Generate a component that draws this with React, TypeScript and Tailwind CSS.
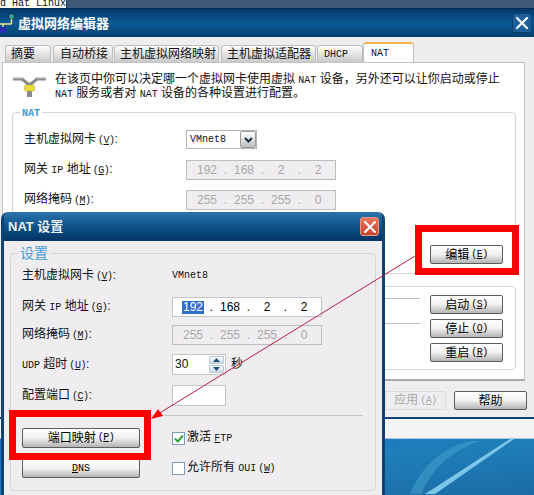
import React from 'react';

const cjk = "font-['Liberation_Sans','Noto_Sans_CJK_SC',sans-serif]";

// SimSun's half width latin
const Latin: React.FC<{ children: React.ReactNode }> = ({ children }) => (
    <span className="font-['Liberation_Mono',monospace] text-[10px]">{children}</span>
);

// mnemonic such as (V)
const Hot: React.FC<{ k: string }> = ({ k }) => (
    <span className="ml-[2px] font-['Liberation_Mono',monospace] text-[10px] tracking-[-0.5px]">
        (<span className="underline">{k}</span>)
    </span>
);

const Button: React.FC<{ className?: string; children: React.ReactNode }> = ({ className, children }) => (
    <div
        className={`flex items-center justify-center rounded-[2px] border border-[#5c5c5c] bg-gradient-to-b from-white via-[#f0f0f0] to-[#b4b4b4] text-[12px] leading-none text-black ${className}`}
    >
        {children}
    </div>
);

const IpField: React.FC<{ parts: string[]; disabled?: boolean; selectFirst?: boolean; className?: string }> = ({
    parts,
    disabled,
    selectFirst,
    className,
}) => (
    <div
        className={`flex h-[20px] w-[150px] items-center pl-[7px] text-[12px] font-['Liberation_Sans',sans-serif] border ${
            disabled ? 'border-[#bdbdbd] bg-[#efedf0] text-[#a9a9a9]' : 'border-[#c4c4c4] bg-white text-black'
        } ${className ?? ''}`}
    >
        {parts.map((p, i) => (
            <React.Fragment key={i}>
                <span className="flex w-[26px] justify-center">
                    <span className={selectFirst && i === 0 ? 'bg-[#2f6fc9] px-px text-white' : ''}>{p}</span>
                </span>
                {i < 3 && <span className="flex w-[11px] justify-center">.</span>}
            </React.Fragment>
        ))}
    </div>
);

const CloseX: React.FC = () => (
    <svg width="12" height="12" viewBox="0 0 12 12">
        <path d="M1 1 L11 11 M11 1 L1 11" stroke="white" strokeWidth="2.2" strokeLinecap="round" />
    </svg>
);

const TeeIcon: React.FC = () => (
    <svg width="34" height="22" viewBox="0 0 34 22">
        <path d="M0 4 H9 L15 9 H18 L24 4 H33" fill="none" stroke="#8a8a8a" strokeWidth="3" />
        <path d="M0 3 H9 M24 3 H33" stroke="#d8d8d8" strokeWidth="1" />
        <rect x="14" y="9" width="5" height="13" fill="#8d8d8d" />
        <rect x="11.500" y="10" width="10" height="6" rx="1.500" fill="#e9df3c" stroke="#a8a020" strokeWidth="0.500" />
    </svg>
);

const NetIcon: React.FC = () => (
    <svg width="16" height="20" viewBox="0 0 16 20">
        <rect x="9" y="1" width="5" height="5" fill="#3fa0a0" stroke="#0b1f3a" strokeWidth="0.600" />
        <path d="M11.500 6 V11 M0 11 H11.500" stroke="#f5e88a" strokeWidth="1.400" fill="none" />
        <rect x="0" y="14" width="6" height="6" fill="#2a2fb0" />
        <path d="M3 11 V14" stroke="#f5e88a" strokeWidth="1.400" />
    </svg>
);

const tabs = [
    { label: '摘要', w: 'w-[46px]', ml: 'ml-[5px]', pl: 'pl-[5px]' },
    { label: '自动桥接', w: 'w-[60px]', ml: 'ml-[2px]', pl: 'pl-[6px]' },
    { label: '主机虚拟网络映射', w: 'w-[105px]', ml: 'ml-px', pl: 'pl-[5px]' },
    { label: '主机虚拟适配器', w: 'w-[95px]', ml: 'ml-[2px]', pl: 'pl-[5px]' },
];

const App: React.FC = () => {
    return (
        <div className={`relative flex h-[495px] w-[534px] flex-col overflow-hidden bg-[#1f6fa8] text-[12px] leading-[13px] text-[#111] ${cjk}`}>
            {/* strip of the window behind */}
            <div className="h-[8px] shrink-0 bg-[#3f5a76]">
                <div className="h-[8px] w-[67px] overflow-hidden border-r border-[#20384f] bg-white">
                    <span className="block font-['Liberation_Mono',monospace] text-[10px] leading-[8px] whitespace-pre">d Hat Linux</span>
                </div>
            </div>

            {/* virtual network editor */}
            <div className="flex h-[411px] shrink-0 flex-col border-b-[2px] border-[#0d4474] bg-[#efedf0]">
                <div className="flex h-[29px] shrink-0 items-center justify-between border-t border-[#022a52] bg-gradient-to-b from-[#033a6c] via-[#0d5a94] to-[#06406f] pr-[2px]">
                    <div className="flex items-center gap-[2px] text-[13px] font-bold text-white">
                        <NetIcon />
                        <span>虚拟网络编辑器</span>
                    </div>
                    <div className="flex h-[20px] w-[20px] items-center justify-center rounded-[3px] border border-[#0b3f6e] bg-[#1d5f98]">
                        <CloseX />
                    </div>
                </div>

                <div className="flex h-[25px] shrink-0 items-end">
                    {tabs.map((t) => (
                        <div
                            key={t.label}
                            className={`flex h-[17px] items-center rounded-t-[3px] border-x border-t border-[#bdbdbd] bg-gradient-to-b from-white to-[#c9c9c9] ${t.w} ${t.ml} ${t.pl}`}
                        >
                            {t.label}
                        </div>
                    ))}
                    <div className="ml-px flex h-[17px] w-[46px] items-center rounded-t-[3px] border-x border-t border-[#bdbdbd] bg-gradient-to-b from-white to-[#c9c9c9] pl-[6px]">
                        <Latin>DHCP</Latin>
                    </div>
                    <div className="flex h-[20px] w-[51px] items-start rounded-t-[3px] border-x border-t-2 border-x-[#bdbdbd] border-t-[#f5b64c] bg-white pt-[3px] pl-[7px]">
                        <Latin>NAT</Latin>
                    </div>
                </div>

                <div className="ml-[2px] flex h-[319px] w-[523px] shrink-0 flex-col border-x border-b-2 border-x-[#c4c4c4] border-b-[#a8a8a8] border-t border-t-[#c4c4c4] bg-white pr-[8px] pl-[9px]">
                    <div className="flex h-[49px] shrink-0 pt-[10px]">
                        <div className="w-[43px] shrink-0 pt-[2px] pl-[1px]">
                            <TeeIcon />
                        </div>
                        <p className="whitespace-nowrap">
                            在该页中你可以决定哪一个虚拟网卡使用虚拟 <Latin>NAT</Latin> 设备，另外还可以让你启动或停止
                            <br />
                            <Latin>NAT</Latin> 服务或者对 <Latin>NAT</Latin> 设备的各种设置进行配置。
                        </p>
                    </div>

                    <div className="relative flex h-[162px] shrink-0 flex-col rounded-[4px] border border-[#d6d6d6] px-[11px] pt-[17px]">
                        <span className="absolute top-[-7px] left-[7px] bg-white px-[2px] font-bold text-[#3f97cc]">
                            <Latin>NAT</Latin>
                        </span>
                        <div className="flex h-[19px] items-center">
                            <span className="w-[162px]">
                                主机虚拟网卡<Hot k="V" />:
                            </span>
                            <div className="flex h-[19px] w-[71px] items-center justify-between border border-[#b4b4b4] pl-[3px]">
                                <Latin>VMnet8</Latin>
                                <div className="flex h-[17px] w-[16px] items-center justify-center rounded-[2px] border border-[#9a9a9a] bg-gradient-to-b from-white to-[#c0c0c0]">
                                    <svg width="9" height="6" viewBox="0 0 9 6">
                                        <path d="M1 1 L4.500 4.500 L8 1" fill="none" stroke="#1a2a3a" strokeWidth="2" />
                                    </svg>
                                </div>
                            </div>
                        </div>
                        <div className="mt-[11px] flex h-[20px] items-center">
                            <span className="w-[162px]">
                                网关 <Latin>IP</Latin> 地址<Hot k="G" />:
                            </span>
                            <IpField parts={['192', '168', '2', '2']} disabled />
                        </div>
                        <div className="mt-[10px] flex h-[20px] items-center">
                            <span className="w-[162px]">
                                网络掩码<Hot k="M" />:
                            </span>
                            <IpField parts={['255', '255', '255', '0']} disabled />
                        </div>
                        <div className="mt-[35px] flex justify-end pr-px">
                            <Button className="h-[19px] w-[73px]">
                                编辑<Hot k="E" />
                            </Button>
                        </div>
                    </div>

                    <div className="mt-[12px] flex h-[84px] shrink-0 rounded-[4px] border border-[#d6d6d6] pr-[12px] pt-[8px]">
                        <div className="flex-1 pt-[3px] pr-[10px]">
                            <div className="h-[25px] border-t border-[#bdbdbd]" />
                            <div className="border-t border-[#bdbdbd]" />
                        </div>
                        <div className="flex w-[73px] flex-col gap-[5px]">
                            <Button className="h-[19px]">
                                启动<Hot k="S" />
                            </Button>
                            <Button className="h-[19px]">
                                停止<Hot k="O" />
                            </Button>
                            <Button className="h-[19px]">
                                重启<Hot k="R" />
                            </Button>
                        </div>
                    </div>
                </div>

                <div className="mt-[10px] flex justify-end gap-[8px] pr-[7px]">
                    <div className="flex h-[19px] w-[61px] items-center justify-center border border-[#dcdcdc] text-[#a8a8a8]">
                        应用<Hot k="A" />
                    </div>
                    <Button className="h-[19px] w-[73px]">帮助</Button>
                </div>
            </div>

            <div className="h-[20px] shrink-0 border-b border-[#a9c6de] bg-[#f4f4f4]" />

            {/* wallpaper */}
            <div className="flex-1 bg-gradient-to-br from-[#2468d0] via-[#1f7fb8] to-[#1b6ca6]">
                <svg width="534" height="55" viewBox="0 0 534 55">
                    <path d="M425 55 L510 0 H514 L435 55 Z" fill="#7cc6ea" />
                    <path d="M410 55 C420 30 440 10 470 2 L480 2 C450 12 430 32 422 55 Z" fill="#3f9fca" opacity="0.6" />
                </svg>
            </div>

            {/* NAT settings dialog */}
            <div className="absolute top-[212px] left-[1px] flex h-[283px] w-[384px] flex-col rounded-t-[7px] border-x-[3px] border-[#0d4474] bg-[#efedf0]">
                <div className="flex h-[29px] shrink-0 items-center justify-between rounded-t-[5px] bg-gradient-to-b from-[#2a74ad] via-[#0f5288] to-[#033464] pr-[3px] pl-[4px] text-[13px] font-bold text-[#e8f0f8]">
                    <span>NAT 设置</span>
                    <div className="flex h-[19px] w-[19px] items-center justify-center rounded-[3px] border border-[#e89a88] bg-gradient-to-b from-[#e8765c] to-[#c8432a]">
                        <CloseX />
                    </div>
                </div>

                <div className="relative mt-[12px] ml-[6px] flex h-[238px] w-[366px] flex-col rounded-[4px] border border-[#d8d6d9] pr-[12px] pt-[15px] pl-[11px]">
                    <span className="absolute top-[-9px] left-[7px] bg-[#efedf0] px-[2px] text-[14px] leading-[16px] text-[#4a9bd4]">设置</span>
                    <div className="flex h-[13px] items-center">
                        <span className="w-[150px]">
                            主机虚拟网卡<Hot k="V" />:
                        </span>
                        <Latin>VMnet8</Latin>
                    </div>
                    <div className="mt-[15px] flex h-[20px] items-center">
                        <span className="w-[150px]">
                            网关 <Latin>IP</Latin> 地址<Hot k="G" />:
                        </span>
                        <IpField parts={['192', '168', '2', '2']} selectFirst />
                    </div>
                    <div className="mt-[8px] flex h-[20px] items-center">
                        <span className="w-[150px]">
                            网络掩码<Hot k="M" />:
                        </span>
                        <IpField parts={['255', '255', '255', '0']} disabled />
                    </div>
                    <div className="mt-[9px] flex h-[21px] items-center">
                        <span className="w-[150px]">
                            <Latin>UDP</Latin> 超时<Hot k="U" />:
                        </span>
                        <div className="flex h-[21px] w-[54px] items-center justify-between border border-[#c4c4c4] bg-white pr-px pl-[2px] font-['Liberation_Sans',sans-serif]">
                            <span>30</span>
                            <div className="flex flex-col gap-px">
                                {[0, 1].map((i) => (
                                    <div
                                        key={i}
                                        className="flex h-[8px] w-[15px] items-center justify-center rounded-[1px] border border-[#b4c8dc] bg-gradient-to-b from-white to-[#cfd8e2]"
                                    >
                                        <svg width="7" height="4" viewBox="0 0 7 4">
                                            <path d={i === 0 ? 'M0 4 L3.500 0 L7 4 Z' : 'M0 0 L3.500 4 L7 0 Z'} fill="#1f4d7a" />
                                        </svg>
                                    </div>
                                ))}
                            </div>
                        </div>
                        <span className="ml-[5px]">秒</span>
                    </div>
                    <div className="mt-[10px] flex h-[21px] items-center">
                        <span className="w-[150px]">
                            配置端口<Hot k="C" />:
                        </span>
                        <div className="h-[21px] w-[54px] border border-[#c4c4c4] bg-white" />
                    </div>
                    <div className="mt-[9px] h-0 border-t border-[#c8c8c8]" />
                    <div className="mt-[12px] flex">
                        <div className="flex w-[150px] flex-col gap-[11px]">
                            <Button className="h-[20px] w-[118px]">
                                端口映射<Hot k="P" />
                            </Button>
                            <Button className="h-[19px] w-[118px]">
                                <Latin>
                                    <span className="underline">D</span>NS
                                </Latin>
                            </Button>
                        </div>
                        <div className="flex flex-col gap-[16px] pt-[3px]">
                            <div className="flex items-center gap-[2px]">
                                <div className="flex h-[13px] w-[13px] items-center justify-center border border-[#7f9db9] bg-white">
                                    <svg width="10" height="9" viewBox="0 0 10 9">
                                        <path d="M1 4.500 L3.800 7.500 L9 1.500" fill="none" stroke="#2fa03a" strokeWidth="2" />
                                    </svg>
                                </div>
                                <span>
                                    激活 <Latin><span className="underline">F</span>TP</Latin>
                                </span>
                            </div>
                            <div className="flex items-center gap-[2px]">
                                <div className="h-[13px] w-[13px] border border-[#7f9db9] bg-white" />
                                <span>
                                    允许所有 <Latin>OUI</Latin>
                                    <Hot k="W" />
                                </span>
                            </div>
                        </div>
                    </div>
                </div>
            </div>

            {/* red annotations */}
            <div className="absolute top-[225px] left-[415px] h-[50px] w-[104px] border-[7px] border-[#ff0000]" />
            <div className="absolute top-[410px] left-[9px] h-[50px] w-[142px] border-[7px] border-[#ff0000]" />
            <svg className="absolute top-0 left-0" width="534" height="495" viewBox="0 0 534 495">
                <path d="M415 256 L158 414" stroke="#b8213c" strokeWidth="1" fill="none" />
                <path d="M151 419 L158 409 L163 416 Z" fill="#ff0000" />
            </svg>
        </div>
    );
};

export default App;
